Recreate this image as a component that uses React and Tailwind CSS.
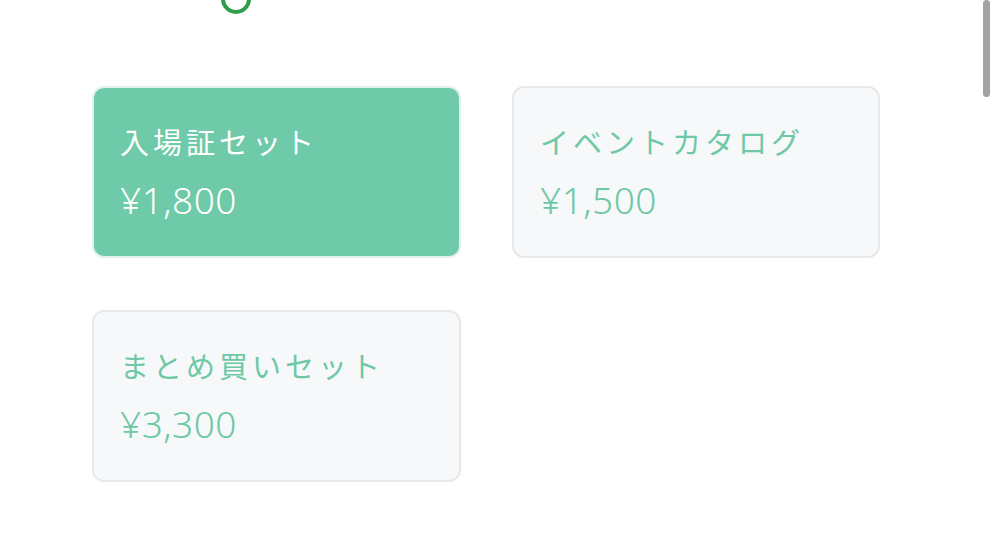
import React from "react";

const items = [
  { name: "入場証セット", price: "¥1,800", selected: true },
  { name: "イベントカタログ", price: "¥1,500", selected: false },
  { name: "まとめ買いセット", price: "¥3,300", selected: false },
];

function Card({ name, price, selected }) {
  return (
    <div
      className={
        "h-[172px] rounded-[12px] border-2 flex flex-col justify-center pl-[26px] pb-[2px] gap-[20px] " +
        (selected
          ? "bg-[#6ecaa8] border-[#e3f1ec] text-white"
          : "bg-[#f6f8f9] border-[#e6e8ea] text-[#6ec8a6]")
      }
    >
      <div className="text-[29px] leading-[38px] tracking-[4px]">{name}</div>
      <div
        className="text-[37px] leading-[40px] font-light tracking-[0.5px]"
        style={{ fontFamily: '"Noto Sans", "Noto Sans CJK JP", sans-serif' }}
      >
        {price}
      </div>
    </div>
  );
}

export default function App() {
  return (
    <div
      className="relative w-[999px] h-[550px] bg-white overflow-hidden"
      style={{ fontFamily: '"Noto Sans CJK JP", "Noto Sans", sans-serif' }}
    >
      <div className="flex items-end justify-between h-[6px] pl-[92px] pr-[84px] overflow-visible">
        <div className="flex items-center gap-[22px] -mb-[8px]">
          <span className="text-[30px] leading-[30px] text-[#c4c7cc] tracking-[8px] translate-y-[-14px]">ᆞᆞᆞ</span>
          <span className="w-[30px] h-[30px] rounded-full border-[4px] border-[#2e9c4a]" />
        </div>
        <span className="text-[28px] leading-[30px] text-[#c4c7cc] tracking-[10px] translate-y-[-12px]">
          ᆞᆞᆞᆞᆞᆞ
        </span>
      </div>
      <div className="grid grid-cols-[369px_368px] gap-x-[51px] gap-y-[52px] pl-[92px] pt-[80px]">
        {items.map((it) => (
          <Card key={it.name} {...it} />
        ))}
      </div>
      <div className="absolute right-[9px] top-0 w-[7px] h-[97px] rounded-full bg-[#a3a3a3]" />
    </div>
  );
}
